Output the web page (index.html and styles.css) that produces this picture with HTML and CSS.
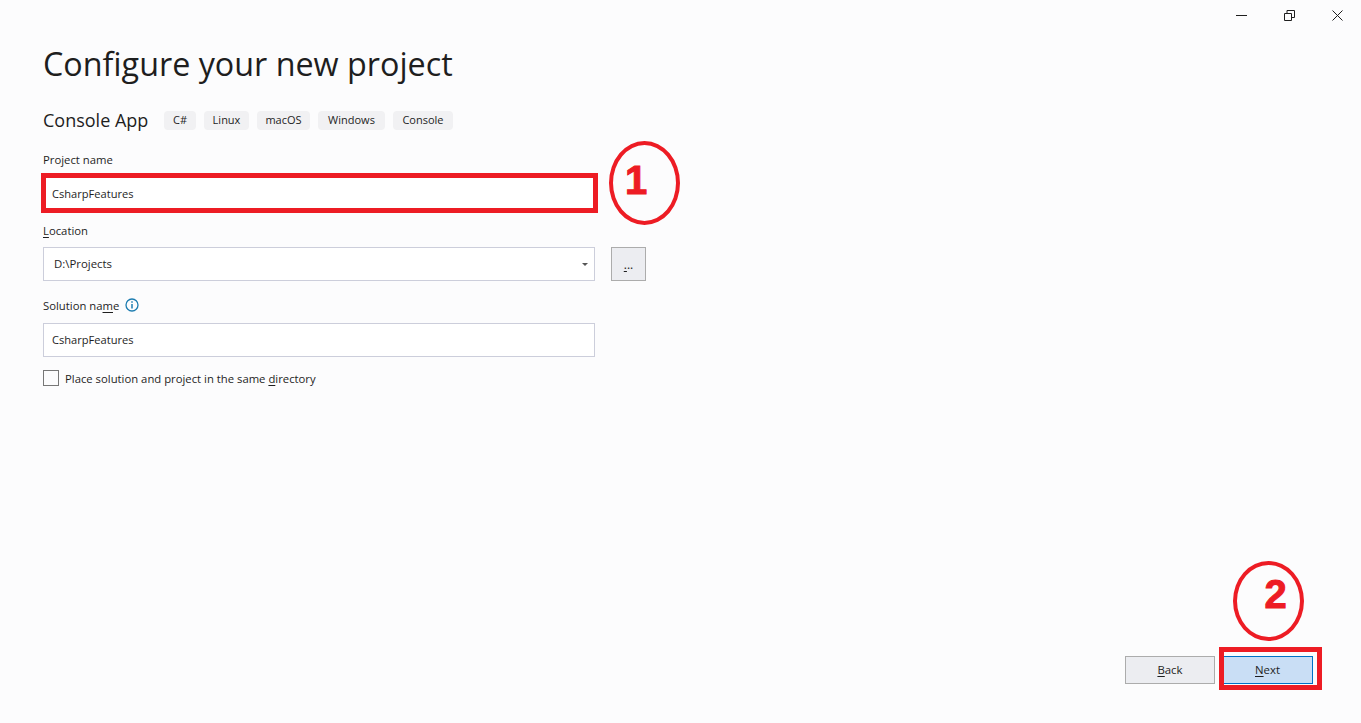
FILE: index.html
```html
<!DOCTYPE html>
<html lang="en">
<head>
    <meta charset="UTF-8">
    <title>Configure your new project</title>
    <link rel="stylesheet" href="styles.css">
</head>
<body>
    <div class="window">
        <div class="title-bar">
            <button class="win-btn" aria-label="Minimize">
                <svg width="11" height="11" viewBox="0 0 11 11"><path d="M0 5.500h11" stroke="#1e1e1e" fill="none"/></svg>
            </button>
            <button class="win-btn" aria-label="Restore">
                <svg width="11" height="11" viewBox="0 0 11 11"><path d="M.5 3.500h7v7h-7zM3 3.500V.5h7.500v7H7.500" stroke="#1e1e1e" fill="none"/></svg>
            </button>
            <button class="win-btn" aria-label="Close">
                <svg width="11" height="11" viewBox="0 0 11 11"><path d="M.5.5l10 10M10.500.5l-10 10" stroke="#1e1e1e" fill="none"/></svg>
            </button>
        </div>

        <div class="content">
            <h1 class="page-title">Configure your new project</h1>

            <div class="template-row">
                <span class="template-name">Console App</span>
                <div class="tags">
                    <span class="tag">C#</span>
                    <span class="tag">Linux</span>
                    <span class="tag">macOS</span>
                    <span class="tag">Windows</span>
                    <span class="tag">Console</span>
                </div>
            </div>

            <div class="field field-project">
                <label class="field-label"><span>Project name</span></label>
                <div class="input-wrap">
                    <div class="text-input">CsharpFeatures</div>
                    <div class="mark mark-input"></div>
                    <div class="callout callout-one">1</div>
                </div>
            </div>

            <div class="field field-location">
                <label class="field-label"><span><u>L</u>ocation</span></label>
                <div class="location-row">
                    <div class="text-input location-input">
                        <span>D:\Projects</span>
                        <span class="caret"></span>
                    </div>
                    <button class="browse-btn"><u>.</u>..</button>
                </div>
            </div>

            <div class="field field-solution">
                <label class="field-label">
                    <span>Solution na<u>m</u>e</span>
                    <svg class="info-icon" width="14" height="14" viewBox="0 0 14 14">
                        <circle cx="7" cy="7" r="6" fill="none" stroke="#1c7cb0" stroke-width="1.300"/>
                        <path d="M7 6v4.500" stroke="#1c7cb0" stroke-width="1.500"/>
                        <path d="M7 3.200v1.600" stroke="#1c7cb0" stroke-width="1.500"/>
                    </svg>
                </label>
                <div class="text-input">CsharpFeatures</div>
            </div>

            <div class="check-row">
                <span class="checkbox"></span>
                <span class="check-label">Place solution and project in the same <u>d</u>irectory</span>
            </div>
        </div>

        <div class="footer">
            <button class="btn"><u>B</u>ack</button>
            <div class="next-wrap">
                <button class="btn btn-primary"><u>N</u>ext</button>
                <div class="mark mark-next"></div>
                <div class="callout callout-two">2</div>
            </div>
        </div>
    </div>
</body>
</html>
```

FILE: styles.css
```css
:root {
    --bg: #fcfcfd;
    --text: #1e1e1e;
    --border: #ccceDB;
    --red: #ed1c24;
}

* {
    margin: 0;
    padding: 0;
    box-sizing: border-box;
}

body {
    font-family: 'Open Sans', 'Noto Sans', sans-serif;
    font-size: 11.300px;
    color: var(--text);
    background-color: var(--bg);
    overflow: hidden;
}

u {
    text-underline-offset: 2px;
}

.window {
    height: 723px;
    display: flex;
    flex-direction: column;
}

.title-bar {
    display: flex;
    justify-content: flex-end;
    height: 30px;
}

.win-btn {
    width: 48px;
    height: 30px;
    border: none;
    background: none;
    display: flex;
    align-items: center;
    justify-content: center;
}

.content {
    padding-left: 43px;
    width: 660px;
    flex-grow: 1;
}

.page-title {
    font-size: 32.300px;
    font-weight: 400;
    line-height: 46px;
    margin-top: 10px;
}

.template-row {
    display: flex;
    align-items: center;
    margin-top: 24px;
    height: 20px;
}

.template-name {
    font-size: 18px;
    width: 121px;
}

.tags {
    display: grid;
    grid-template-columns: 32px 45px 53px 67px 60px;
    gap: 8px;
}

.tag {
    font-size: 11px;
    line-height: 18px;
    padding-bottom: 1px;
    text-align: center;
    border-radius: 4px;
    background: #f1f1f3;
}

.field-label {
    display: flex;
    align-items: center;
    gap: 6px;
    height: 18px;
    margin-bottom: 9px;
}

.field-project {
    margin-top: 20px;
}

.field-location {
    margin-top: 10px;
}

.field-location .field-label {
    margin-bottom: 8px;
}

.field-solution {
    margin-top: 15px;
}

.input-wrap {
    position: relative;
}

.text-input {
    width: 552px;
    height: 34px;
    line-height: 32px;
    padding-left: 8px;
    font-size: 11.100px;
    background: #fff;
    border: 1px solid var(--border);
}

.location-row {
    display: flex;
    gap: 16px;
}

.location-input {
    display: flex;
    align-items: center;
    justify-content: space-between;
    padding-left: 10px;
    padding-right: 6px;
    font-size: 11.400px;
}

.caret {
    border-left: 3px solid transparent;
    border-right: 3px solid transparent;
    border-top: 3px solid #555;
}

.browse-btn {
    width: 35px;
    height: 34px;
    font-family: inherit;
    font-size: 12px;
    color: var(--text);
    background: #ecedf1;
    border: 1px solid #acacac;
}

.check-row {
    display: flex;
    align-items: center;
    gap: 6px;
    margin-top: 12px;
}

.check-label {
    padding-top: 2px;
}

.checkbox {
    width: 16px;
    height: 16px;
    background: var(--bg);
    border: 1px solid #777;
}

.footer {
    display: flex;
    justify-content: flex-end;
    gap: 7px;
    padding: 0 48px 39px 0;
}

.btn {
    width: 90px;
    height: 28px;
    padding-bottom: 2px;
    font-family: inherit;
    font-size: 11.400px;
    color: var(--text);
    background: #ecedf1;
    border: 1px solid #acacac;
}

.btn-primary {
    display: block;
    width: 91px;
    background: #c9def5;
    border-color: #0071c5;
}

.next-wrap {
    position: relative;
}

/* red annotations drawn over the dialog */
.mark {
    position: absolute;
    border: 5px solid var(--red);
}

.mark-input {
    left: -2px;
    top: -4px;
    width: 557px;
    height: 40px;
}

.mark-next {
    left: -3px;
    top: -9px;
    width: 103px;
    height: 43px;
}

.callout {
    position: absolute;
    width: 71px;
    height: 84px;
    display: flex;
    align-items: center;
    justify-content: center;
    border: 4px solid var(--red);
    border-radius: 50%;
    font-family: 'Liberation Sans', sans-serif;
    font-size: 40px;
    font-weight: 700;
    -webkit-text-stroke: 1px var(--red);
    color: var(--red);
}

.callout-one {
    left: 566px;
    top: -36px;
    padding: 0 17px 6px 0;
}

.callout-two {
    left: 11px;
    top: -95px;
    height: 80px;
    padding: 0 0 13px 14px;
}
```
